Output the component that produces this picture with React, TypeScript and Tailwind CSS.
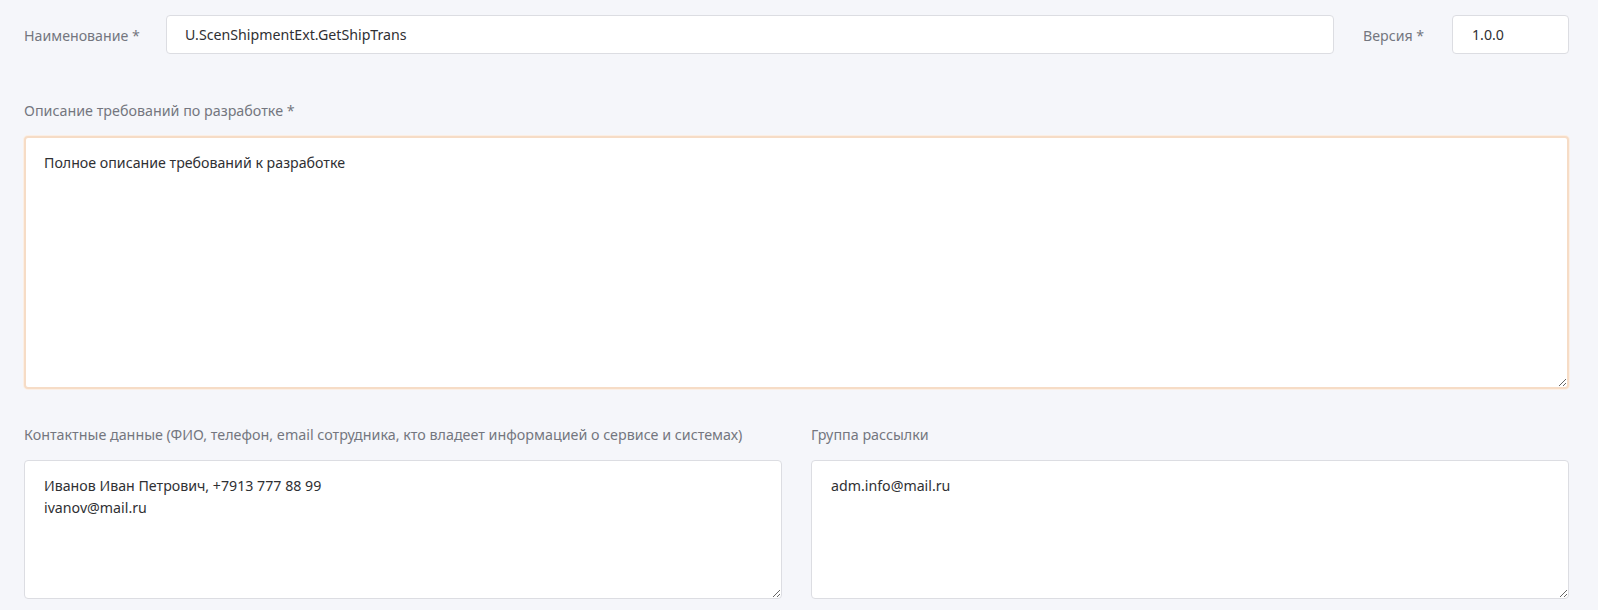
import React from "react";

const font = { fontFamily: '"Noto Sans", "Open Sans", sans-serif' };

const Field = ({
  label,
  value,
  heightClass,
  focused,
}: {
  label: string;
  value: string;
  heightClass: string;
  focused?: boolean;
}) => (
  <div className="flex flex-col min-w-0">
    <label className="text-[14.3px] leading-5 text-[#74767f] mb-[15px] whitespace-nowrap">{label}</label>
    <textarea
      readOnly
      defaultValue={value}
      className={`${heightClass} w-full block bg-white rounded-[4px] py-[14px] text-[14.2px] leading-[22px] text-[#2f3033] outline-none ${
        focused
          ? "px-[18px] border-2 border-[#f6dcc6] shadow-[0_0_0_1px_#fbefe5]"
          : "px-[19px] border border-[#dcdde2]"
      }`}
      style={font}
    />
  </div>
);

const App = () => {
  return (
    <div className="w-full h-screen overflow-hidden bg-[#f5f6fa] pl-6 pr-[29px] pt-[15px]" style={font}>
      {/* Name + version row */}
      <div className="flex items-center h-[39px]">
        <span className="w-[142px] shrink-0 text-[14.2px] text-[#74767f] pt-[2px]">Наименование *</span>
        <div className="flex-1 h-full flex items-center bg-white border border-[#dcdde2] rounded-[4px] px-[18px] text-[14.2px] text-[#2f3033]">
          U.ScenShipmentExt.GetShipTrans
        </div>
        <span className="w-[89px] shrink-0 ml-[29px] text-[14.2px] text-[#74767f] pt-[2px]">Версия *</span>
        <div className="w-[117px] h-full flex items-center bg-white border border-[#dcdde2] rounded-[4px] px-[19px] text-[14.2px] text-[#2f3033]">
          1.0.0
        </div>
      </div>

      <div className="mt-[47px]">
        <Field
          label="Описание требований по разработке *"
          value="Полное описание требований к разработке"
          heightClass="h-[253px]"
          focused
        />
      </div>

      <div className="mt-[36px] grid grid-cols-2 gap-[29px]">
        <Field
          label="Контактные данные (ФИО, телефон, email сотрудника, кто владеет информацией о сервисе и системах)"
          value={"Иванов Иван Петрович, +7913 777 88 99\nivanov@mail.ru"}
          heightClass="h-[139px]"
        />
        <Field label="Группа рассылки" value="adm.info@mail.ru" heightClass="h-[139px]" />
      </div>
    </div>
  );
};

export default App;
